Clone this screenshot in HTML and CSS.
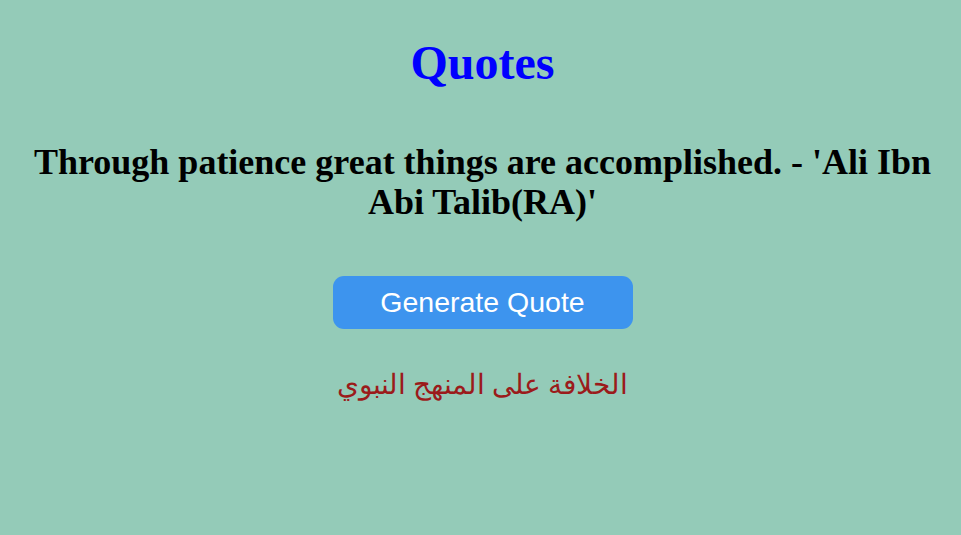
FILE: index.html
```html
<!DOCTYPE html>
<html>
<head>
<meta charset="utf-8">
<link rel="stylesheet" href="styles.css">
</head>
<body>
<div class="page">
  <h1 class="title">Quotes</h1>
  <h2 class="quote">Through patience great things are accomplished. - 'Ali Ibn Abi Talib(RA)'</h2>
  <button class="btn">Generate Quote</button>
  <p class="arabic" dir="rtl">الخلافة على المنهج النبوي</p>
</div>
</body>
</html>
```
FILE: styles.css
```css
html, body {
  margin: 0;
  background: #94cbb8;
}
body {
  padding: 8px 6px 8px 10px;
  font-family: "Liberation Serif", "Times New Roman", serif;
}
.page {
  display: flex;
  flex-direction: column;
  align-items: center;
  text-align: center;
}
.title {
  color: #0000ff;
  font-size: 48px;
  font-weight: bold;
  line-height: 55px;
  margin: 27px 0 0;
}
.quote {
  font-size: 36px;
  font-weight: bold;
  color: #000;
  margin: 52px 0 0;
  line-height: 40px;
}
.btn {
  margin-top: 54px;
  width: 300px;
  height: 53px;
  border: none;
  border-radius: 11px;
  background: #3d94ee;
  color: #fff;
  font-family: "Liberation Sans", Arial, sans-serif;
  font-size: 28.5px;
  cursor: pointer;
}
.arabic {
  margin: 39px 0 0;
  color: #9b1b1b;
  font-size: 28px;
}
```
